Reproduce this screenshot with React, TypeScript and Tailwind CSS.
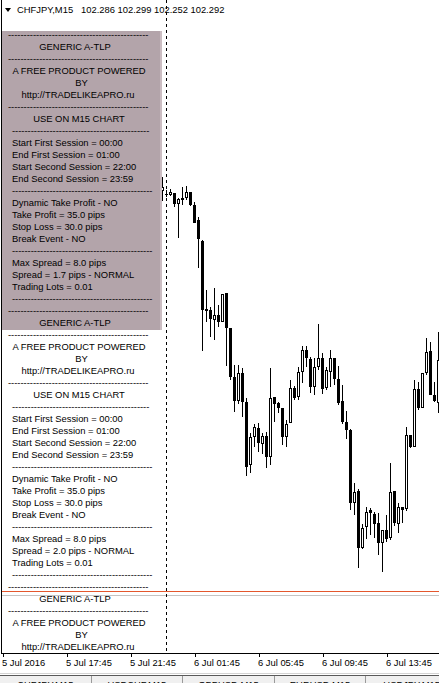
import React from "react";

// wick top, wick bottom, body top, body bottom, bullish (hollow) flag
type Candle = [number, number, number, number, 0 | 1];

const CANDLES: Candle[] = [
  [177, 201, 187, 191, 1],
  [190, 197, 194, 195, 0],
  [189, 196, 192, 195, 1],
  [193, 207, 193, 204, 0],
  [198, 238, 199, 204, 1],
  [187, 205, 198, 200, 0],
  [186, 200, 192, 198, 1],
  [192, 206, 192, 205, 0],
  [202, 223, 205, 223, 0],
  [217, 268, 220, 239, 0],
  [240, 351, 241, 310, 0],
  [290, 322, 309, 311, 0],
  [307, 337, 310, 319, 0],
  [288, 340, 315, 320, 1],
  [305, 327, 315, 322, 0],
  [294, 322, 294, 322, 1],
  [293, 366, 293, 328, 0],
  [328, 380, 328, 377, 0],
  [365, 412, 377, 401, 0],
  [365, 404, 373, 401, 1],
  [368, 417, 373, 402, 0],
  [398, 476, 402, 467, 0],
  [433, 473, 437, 465, 1],
  [424, 447, 427, 437, 1],
  [423, 452, 428, 443, 0],
  [433, 454, 436, 444, 1],
  [432, 468, 436, 457, 0],
  [368, 465, 398, 457, 1],
  [397, 422, 397, 404, 0],
  [402, 413, 403, 408, 0],
  [408, 445, 408, 437, 0],
  [420, 447, 424, 437, 1],
  [380, 423, 388, 423, 1],
  [386, 400, 388, 398, 0],
  [367, 400, 372, 397, 1],
  [346, 383, 350, 372, 1],
  [346, 367, 350, 358, 0],
  [357, 393, 359, 387, 0],
  [358, 395, 367, 387, 1],
  [324, 370, 358, 367, 1],
  [353, 394, 358, 389, 0],
  [367, 390, 370, 388, 1],
  [350, 387, 358, 372, 1],
  [358, 385, 358, 379, 0],
  [366, 405, 379, 403, 0],
  [385, 424, 401, 422, 0],
  [411, 439, 422, 430, 0],
  [429, 510, 430, 503, 0],
  [483, 515, 492, 503, 1],
  [489, 568, 491, 548, 0],
  [524, 549, 528, 548, 1],
  [507, 539, 512, 527, 1],
  [508, 535, 510, 513, 0],
  [512, 538, 514, 524, 0],
  [513, 555, 523, 543, 0],
  [530, 572, 530, 543, 1],
  [515, 542, 530, 539, 0],
  [463, 540, 492, 538, 1],
  [491, 526, 491, 523, 0],
  [503, 533, 507, 524, 1],
  [507, 523, 507, 510, 0],
  [427, 511, 435, 509, 1],
  [435, 448, 435, 447, 0],
  [380, 447, 389, 447, 1],
  [382, 410, 389, 408, 0],
  [373, 408, 373, 408, 1],
  [338, 375, 352, 373, 1],
  [342, 395, 351, 395, 0],
  [382, 402, 395, 401, 0],
  [332, 413, 360, 403, 1],
];

type Row =
  | { kind: "dashA" | "dashB" | "dashC" }
  | { kind: "center"; text: string; shift?: "left4" | "left1" | "right2" }
  | { kind: "left"; text: string };

function panelRows(spread: string): Row[] {
  return [
    { kind: "dashA" },
    { kind: "center", text: "GENERIC A-TLP", shift: "left4" },
    { kind: "dashA" },
    { kind: "center", text: "A FREE PRODUCT POWERED" },
    { kind: "center", text: "BY", shift: "right2" },
    { kind: "center", text: "http://TRADELIKEAPRO.ru", shift: "left1" },
    { kind: "dashA" },
    { kind: "center", text: "USE ON M15 CHART" },
    { kind: "dashC" },
    { kind: "left", text: "Start First Session = 00:00" },
    { kind: "left", text: "End First Session = 01:00" },
    { kind: "left", text: "Start Second Session = 22:00" },
    { kind: "left", text: "End Second Session = 23:59" },
    { kind: "dashB" },
    { kind: "left", text: "Dynamic Take Profit - NO" },
    { kind: "left", text: "Take Profit = 35.0 pips" },
    { kind: "left", text: "Stop Loss = 30.0 pips" },
    { kind: "left", text: "Break Event - NO" },
    { kind: "dashB" },
    { kind: "left", text: "Max Spread = 8.0 pips" },
    { kind: "left", text: `Spread = ${spread} pips - NORMAL` },
    { kind: "left", text: "Trading Lots = 0.01" },
    { kind: "dashB" },
  ];
}

// three copies of the label set; the last one runs into the bottom of the window
const ROWS: Row[] = [...panelRows("1.7"), ...panelRows("2.0"), ...panelRows("2.0").slice(0, 6)];

const DASHES = "-".repeat(45);

function PanelRow({ row }: { row: Row }) {
  if (row.kind === "dashA") return <div className="ml-[6px] h-[12px] whitespace-nowrap">{DASHES}</div>;
  if (row.kind === "dashB") return <div className="ml-[10px] h-[12px] whitespace-nowrap">{DASHES}</div>;
  if (row.kind === "dashC") return <div className="ml-[10px] h-[12px] whitespace-nowrap">{DASHES.slice(1)}</div>;
  if (row.kind === "left") return <div className="h-[12px] whitespace-nowrap pl-[10px]">{row.text}</div>;
  const shift =
    row.shift === "left4" ? "pr-[8px]" : row.shift === "left1" ? "pr-[2px]" : row.shift === "right2" ? "pl-[5px]" : "";
  return <div className={`h-[12px] whitespace-nowrap text-center ${shift}`}>{row.text}</div>;
}

function CandleChart() {
  return (
    <svg className="pointer-events-none absolute left-[-2px] top-0" width={439} height={653} shapeRendering="crispEdges">
      {CANDLES.map(([hi, lo, top, bot, up], i) => {
        const x = 162 + i * 4;
        const h = Math.max(1, bot - top);
        return (
          <g key={i}>
            <rect x={x} y={hi} width={1} height={lo - hi} fill="#000" />
            <rect x={x - 1} y={top} width={3} height={h} fill="#000" />
            {up && h > 2 ? <rect x={x} y={top + 1} width={1} height={h - 2} fill="#fff" /> : null}
          </g>
        );
      })}
    </svg>
  );
}

const TIME_LABELS = ["5 Jul 2016", "5 Jul 17:45", "5 Jul 21:45", "6 Jul 01:45", "6 Jul 05:45", "6 Jul 09:45", "6 Jul 13:45"];
const TABS = ["CHFJPY,M15", "USDCHF,M15", "GBPUSD,M15", "EURUSD,M15", "USDJPY,M15"];

export default function App() {
  return (
    <div className="relative h-[683px] w-[439px] overflow-hidden bg-white font-['Liberation_Sans',Arial,sans-serif] text-[9.4px] leading-[12px] text-black">
      {/* chart window */}
      <div className="relative ml-px h-[654px] overflow-hidden border-b border-l border-black">
        <CandleChart />

        {/* rectangle label behind the info panel */}
        <div className="absolute left-0 top-[31px] flex h-[299px] w-[160px]">
          <div className="flex-1 bg-[#b3a4aa]" />
          <div className="w-[2px] bg-[#cbbdc2]" />
        </div>

        <div className="relative flex h-[20px] items-center pl-[3px]">
          <svg width={6} height={4} viewBox="0 0 6 4">
            <polygon points="0,0 6,0 3,4" fill="#000" />
          </svg>
          <span className="ml-[6px] w-[64px]">CHFJPY,M15</span>
          <span className="whitespace-nowrap">102.286 102.299 102.252 102.292</span>
        </div>

        <div className="relative mt-[9px] w-[154px]">
          {ROWS.map((row, i) => (
            <PanelRow key={i} row={row} />
          ))}
        </div>

        {/* subwindow separator */}
        <div className="absolute left-0 right-0 top-[591px] h-px bg-[#e4572e]" />
        <div className="absolute left-0 right-0 top-[595px] h-px bg-[#c4c4c4]" />

        {/* period separator */}
        <svg className="absolute left-[164px] top-0" width={1} height={653} shapeRendering="crispEdges">
          <line x1={0.5} y1={0} x2={0.5} y2={653} stroke="#000" strokeDasharray="3 3" />
        </svg>
      </div>

      {/* time axis */}
      <div className="ml-[2px] flex h-[19px]">
        {TIME_LABELS.map((label) => (
          <div key={label} className="w-[64px] shrink-0">
            <div className="ml-px h-[3px] w-px bg-black" />
            <span className="whitespace-nowrap">{label}</span>
          </div>
        ))}
      </div>
      <div className="h-px bg-[#d4d4d4]" />
      <div className="h-px bg-white" />

      {/* chart tabs */}
      <div className="flex h-[30px] border-t border-[#5a5a5a] bg-[#f0f0f0]">
        {TABS.map((tab) => (
          <div key={tab} className="flex w-[91.6px] shrink-0 justify-center border-r border-[#9a9a9a] pt-[3px]">
            {tab}
          </div>
        ))}
      </div>
    </div>
  );
}
